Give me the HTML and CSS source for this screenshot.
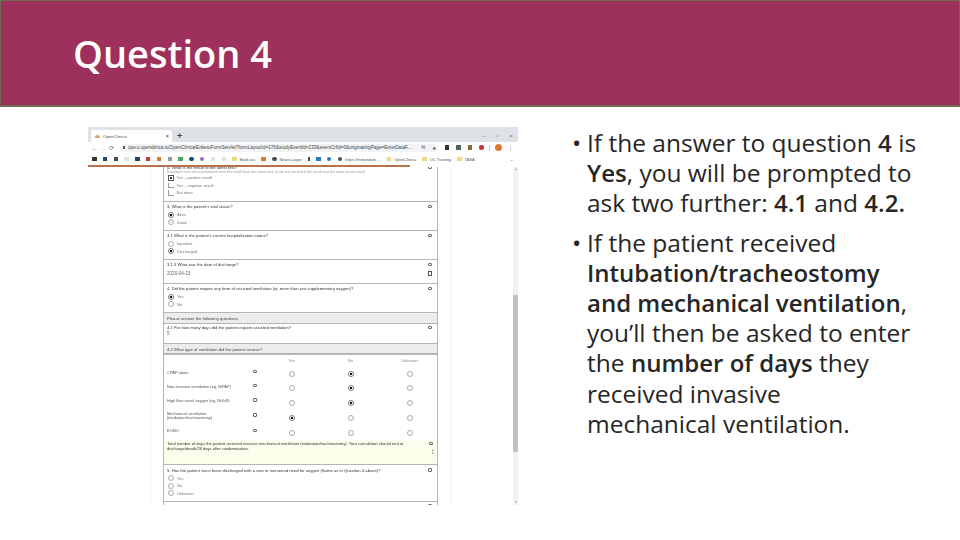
FILE: index.html
```html
<!DOCTYPE html>
<html lang="en">
<head>
<meta charset="utf-8">
<title>Question 4</title>
<link rel="stylesheet" href="styles.css">
</head>
<body>
<header class="banner"><h1>Question 4</h1></header>
<main class="content">
  <section class="shot">
    <div class="tabs">
      <div class="tab"><span class="fav"></span><span class="tabname">OpenClinica</span><span class="x">×</span></div>
      <span class="plus">+</span>
      <div class="winctl"><span>–</span><span>▫</span><span>×</span></div>
    </div>
    <div class="urlbar">
      <span class="nav">←</span><span class="nav lite">→</span><span class="nav">⟳</span>
      <div class="url"><span class="lock"></span>ope.u.opendinica.io/OpenClinica/EnketoFormServlet?formLayoutId=176&amp;studyEventId=233&amp;eventCrfId=0&amp;originatingPage=EnterDataF...<span class="urlend">%</span><span class="star">★</span></div>
      <div class="ext"><i class="ic dk"></i><i class="ic gr"></i><i class="ic br"></i><i class="ic rd rnd"></i><span class="sep"></span><i class="ic or rnd big"></i><span class="dots">⋮</span></div>
    </div>
    <div class="bookmarks">
      <i class="ic dk"></i><i class="ic nv"></i><i class="ic dk2"></i><i class="ic pale"></i><i class="ic nv"></i><i class="ic rd"></i><i class="ic or"></i><i class="ic gy"></i><i class="ic gn"></i><i class="ic nv rnd"></i><i class="ic pu rnd"></i><i class="ic pale"></i><i class="ic pale"></i>
      <i class="ic yl"></i><span class="bm">Bank.ias</span><i class="ic or"></i><i class="ic dk2 rnd"></i><span class="bm">News Larger</span><i class="ic dk2 thin"></i><i class="ic bl"></i><i class="ic bl rnd"></i><i class="ic dk2 rnd"></i><span class="bm">https://mmandure ...</span><i class="ic yl"></i><span class="bm">OpenClinica</span><i class="ic yl"></i><span class="bm">OC Training</span><i class="ic yl"></i><span class="bm">TASA</span><span class="more">⌄</span>
    </div>
    <div class="progress"></div>
    <div class="viewport">
      <div class="page">
        <div class="form">
          <div class="row r1">
            <p class="q clip">4. What is the result of the latest test?<b class="cm"></b></p>
            <p class="hint">If multiple tests were performed enter the result from the latest test, or the test for which the result was the most recent result</p>
            <p class="opt"><span class="box on"></span>Yes – positive result</p>
            <p class="opt"><span class="box"></span>Yes – negative result</p>
            <p class="opt"><span class="box"></span>Not done</p>
          </div>
          <div class="row r2">
            <p class="q">3. What is the patient's vital status?<b class="cm"></b></p>
            <p class="opt"><span class="radio on"></span>Alive</p>
            <p class="opt"><span class="radio"></span>Dead</p>
          </div>
          <div class="row r3">
            <p class="q">3.1 What is the patient's current hospitalization status?<b class="cm"></b></p>
            <p class="opt"><span class="radio"></span>Inpatient</p>
            <p class="opt"><span class="radio on"></span>Discharged</p>
          </div>
          <div class="row r4">
            <p class="q">3.1.3 What was the date of discharge?<b class="cm"></b></p>
            <p class="val">2020-04-23<b class="cal"></b></p>
          </div>
          <div class="row r5">
            <p class="q">4. Did the patient require any form of assisted ventilation (ie, more than just supplementary oxygen)?<b class="cm"></b></p>
            <p class="opt"><span class="radio on"></span>Yes</p>
            <p class="opt"><span class="radio"></span>No</p>
          </div>
          <div class="sect s1">Please answer the following questions</div>
          <div class="row r6">
            <p class="q">4.1 For how many days did the patient require assisted ventilation?<b class="cm"></b></p>
            <p class="val small">5</p>
          </div>
          <div class="sect s2">4.2 What type of ventilation did the patient receive?</div>
          <div class="grid">
            <span></span><span></span><span class="h">Yes</span><span class="h">No</span><span class="h">Unknown</span>
            <span class="l">CPAP alone</span><b class="cm"></b><span class="c"><i class="radio"></i></span><span class="c"><i class="radio on"></i></span><span class="c"><i class="radio"></i></span>
            <span class="l">Non-invasive ventilation (eg, BiPAP)</span><b class="cm"></b><span class="c"><i class="radio"></i></span><span class="c"><i class="radio on"></i></span><span class="c"><i class="radio"></i></span>
            <span class="l">High flow nasal oxygen (eg, NiVaS)</span><b class="cm"></b><span class="c"><i class="radio"></i></span><span class="c"><i class="radio on"></i></span><span class="c"><i class="radio"></i></span>
            <span class="l">Mechanical ventilation<br>(intubation/tracheostomy)</span><b class="cm"></b><span class="c"><i class="radio on"></i></span><span class="c"><i class="radio"></i></span><span class="c"><i class="radio"></i></span>
            <span class="l">ECMO</span><b class="cm"></b><span class="c"><i class="radio"></i></span><span class="c"><i class="radio"></i></span><span class="c"><i class="radio"></i></span>
          </div>
          <div class="note">
            <p>Total number of days the patient received invasive mechanical ventilation (intubation/tracheostomy). Your calculation should end at<br>discharge/death/28 days after randomisation.</p>
            <div class="notectl"><b class="cm"></b><span class="spin">▴<br>▾</span></div>
          </div>
          <div class="row r7">
            <p class="q">5. Has the patient since been discharged with a new or worsened need for oxygen (Same as in Question 4 above)?<b class="cm"></b></p>
            <p class="opt"><span class="radio"></span>Yes</p>
            <p class="opt"><span class="radio"></span>No</p>
            <p class="opt"><span class="radio"></span>Unknown</p>
          </div>
          <div class="row r8">
            <p class="q">6. Did the patient require any use of renal dialysis since randomisation?<b class="cm"></b></p>
          </div>
        </div>
      </div>
      <div class="scroll"><span class="arrow">▴</span><span class="track"><span class="thumb"></span></span><span class="arrow">▾</span></div>
    </div>
  </section>
  <ul class="points">
    <li>If the answer to question <b>4</b> is<br><b>Yes</b>, you will be prompted to<br>ask two further: <b>4.1</b> and <b>4.2.</b></li>
    <li>If the patient received<br><b>Intubation/tracheostomy<br>and mechanical ventilation</b>,<br>you’ll then be asked to enter<br>the <b>number of days</b> they<br>received invasive<br>mechanical ventilation.</li>
  </ul>
</main>
</body>
</html>
```
FILE: styles.css
```css
* { box-sizing: border-box; margin: 0; padding: 0; }
html, body { width: 960px; height: 540px; overflow: hidden; background: #fff; }
body { font-family: "Open Sans", "Liberation Sans", sans-serif; color: #1f1f1f; }

.banner {
  height: 107px;
  background: #9e315b;
  border: 1px solid #6d6a4d;
  border-bottom-width: 2px;
  padding: 28px 0 0 72px;
}
.banner h1 { font-size: 38px; line-height: 48px; font-weight: 600; color: #fff; letter-spacing: 0; }

.content { display: flex; padding: 20px 0 0 88px; }

.shot {
  width: 430px;
  height: 378px;
  display: flex;
  flex-direction: column;
  overflow: hidden;
  font-family: "Liberation Sans", sans-serif;
  filter: blur(0.5px);
  flex: none;
}

.tabs { height: 15px; background: #dee1e6; display: flex; align-items: flex-end; padding-left: 3px; }
.tab { width: 81px; height: 12px; background: #fff; border-radius: 2px 2px 0 0; display: flex; align-items: center; padding: 0 3px 0 4px; font-size: 4.4px; color: #555; }
.fav { width: 5px; height: 3px; border-radius: 3px 3px 0 0; background: #d9a36b; margin-right: 3px; }
.tabname { flex: 1; }
.x { font-size: 6px; color: #333; }
.plus { font-size: 9px; line-height: 12px; font-weight: bold; color: #444; margin-left: 5px; }
.winctl { margin-left: auto; display: flex; gap: 11px; font-size: 6px; line-height: 12px; color: #777; padding-right: 5px; }

.urlbar { height: 11px; background: #fff; display: flex; align-items: center; padding-left: 4px; font-size: 5px; color: #666; }
.nav { width: 8.5px; font-size: 5.5px; }
.nav.lite { color: #aaa; }
.url { margin-left: 2px; width: 318px; height: 8px; flex: none; border-radius: 4px; background: #f1f3f4; display: flex; align-items: center; padding: 0 2px 0 9px; font-size: 4.65px; color: #444; white-space: nowrap; overflow: hidden; }
.lock { flex: none; width: 2.5px; height: 3px; background: #555; margin: 0 3px 0 -6px; }
.urlend { margin-left: auto; padding-left: 2px; }
.star { margin-left: 6px; font-size: 5px; color: #555; }
.ext { display: flex; align-items: center; gap: 7px; margin-left: 7px; }
.sep { width: 1px; height: 6px; background: #ccc; margin: 0 -2px; }
.dots { font-size: 5px; margin-left: -1px; }

.bookmarks { height: 12px; background: #fff; display: flex; align-items: center; padding-left: 4px; gap: 6.3px; font-size: 4px; color: #555; white-space: nowrap; overflow: hidden; }
.bm { margin-left: -3.5px; }
.more { margin-left: auto; padding-right: 5px; color: #666; }
.ic { flex: none; display: block; width: 4.5px; height: 4.5px; }
.rnd { border-radius: 50%; }
.big { width: 7px; height: 7px; }
.thin { width: 1.5px; }
.dk { background: #38332f; }
.dk2 { background: #4a4d55; }
.nv { background: #24476e; }
.gr { background: #4d6b5c; }
.br { background: #8a6a3a; }
.rd { background: #c4343c; }
.or { background: #dd7a32; }
.gy { background: #8f9a9a; }
.gn { background: #4ca55a; }
.pu { background: #9a6cc0; }
.pale { background: #dfe3e6; }
.yl { background: #f2d684; }
.bl { background: #2f78c4; }

.progress { height: 1.5px; width: 322px; background: #b8714a; flex: none; }

.viewport { flex: 1; min-height: 0; display: flex; background: #fff; overflow: hidden; }
.page { width: 425px; padding: 0 12px 0 62px; overflow: hidden; }
.form {
  width: 301px;
  padding: 0 12px;
  border-left: 1px solid #f3f3f3;
  border-right: 1px solid #f3f3f3;
  height: 340px;
  margin-top: -1.5px;
  font-size: 4.2px;
  line-height: 5px;
  color: #444;
  box-sizing: border-box;
  overflow: hidden;
}

.row, .sect, .grid, .note { width: 275px; border-left: 1px solid #b5b5b5; border-right: 1px solid #b5b5b5; }
.row { padding: 0 3px; border-bottom: 1px solid #b5b5b5; }
.r1 { height: 37px; }
.r2 { height: 29px; padding-top: 2px; }
.r3 { height: 29px; padding-top: 2px; }
.r4 { height: 24px; padding-top: 2px; }
.r5 { height: 29px; padding-top: 2px; }
.r6 { height: 20px; padding-top: 1px; }
.r7 { height: 37px; padding-top: 3px; }
.r8 { height: 10px; padding-top: 2px; border-bottom: 0; }

.q { display: flex; justify-content: space-between; align-items: center; height: 5px; color: #333; white-space: nowrap; }
.hint { font-size: 3.6px; line-height: 4px; color: #999; white-space: nowrap; overflow: hidden; }
.opt { display: flex; align-items: center; height: 7.5px; margin-left: 1px; color: #777; font-size: 4px; }
.r2 .q, .r3 .q, .r5 .q, .r7 .q { margin-bottom: 2px; }
.val { display: flex; justify-content: space-between; align-items: center; margin-top: 4px; color: #666; font-size: 4.6px; }
.val.small { margin-top: 1px; }

.box { width: 5.5px; height: 5.5px; border-left: 1px solid #999; border-bottom: 1px solid #999; margin-right: 3px; flex: none; }
.box.on { border: 1px solid #555; background: radial-gradient(circle, #333 35%, #fff 45%); }
.radio { display: block; flex: none; width: 6px; height: 6px; border-radius: 50%; border: 0.6px solid #aaa; margin-right: 3px; background: #fff; }
.radio.on { border-color: #777; background: radial-gradient(circle, #111 48%, #fff 55%); }
.c .radio { margin: 0; }

.cm { display: block; flex: none; width: 4px; height: 3.5px; border: 0.7px solid #666; border-radius: 1px; margin-right: 2px; }
.cal { display: block; flex: none; width: 4.5px; height: 4.5px; border: 0.8px solid #555; margin-right: 2px; }

.sect { height: 11px; background: #ececec; border-bottom: 1px solid #b5b5b5; padding: 2.5px 3px 0; color: #444; }
.s2 { border-bottom-width: 2px; }

.grid {
  display: grid;
  grid-template-columns: 86px 9px 59px 59px 59px;
  grid-template-rows: 11px 14px 14px 14.5px 15.5px 15.5px;
  align-items: center;
  height: 84.5px;
  padding-left: 3px;
  font-size: 4px;
  color: #555;
  line-height: 4.6px;
}
.grid .cm { margin: 0 0 3px; }
.h, .c { display: flex; justify-content: center; }
.c { padding-top: 2.5px; }
.h { padding-top: 2px; color: #888; }

.note { height: 25px; background: #fdfdec; border-bottom: 1px solid #b5b5b5; display: flex; justify-content: space-between; padding: 1px 3px 0; color: #333; font-size: 4.1px; line-height: 5.5px; white-space: nowrap; }
.notectl { display: flex; flex-direction: column; align-items: flex-end; gap: 4px; padding-top: 1px; }
.notectl .cm { margin-right: 1px; }
.spin { font-size: 3px; line-height: 2.5px; color: #555; }

.scroll { width: 5px; display: flex; flex-direction: column; background: #f1f1f1; font-size: 3px; color: #666; text-align: center; flex: none; }
.arrow { height: 5px; line-height: 5px; flex: none; }
.track { flex: 1; padding-top: 123px; }
.thumb { display: block; height: 157px; background: #c1c1c1; }

.points { list-style: none; width: 370px; padding: 0 0 0 54px; font-size: 24.5px; line-height: 30.1px; color: #262626; flex: none; margin-top: 1px; }
.points li { position: relative; padding-left: 15px; white-space: nowrap; margin-bottom: 9.8px; }
.points li::before { content: "•"; position: absolute; left: 0; top: 0; }
.points b { font-weight: 600; font-size: 24px; }
```
